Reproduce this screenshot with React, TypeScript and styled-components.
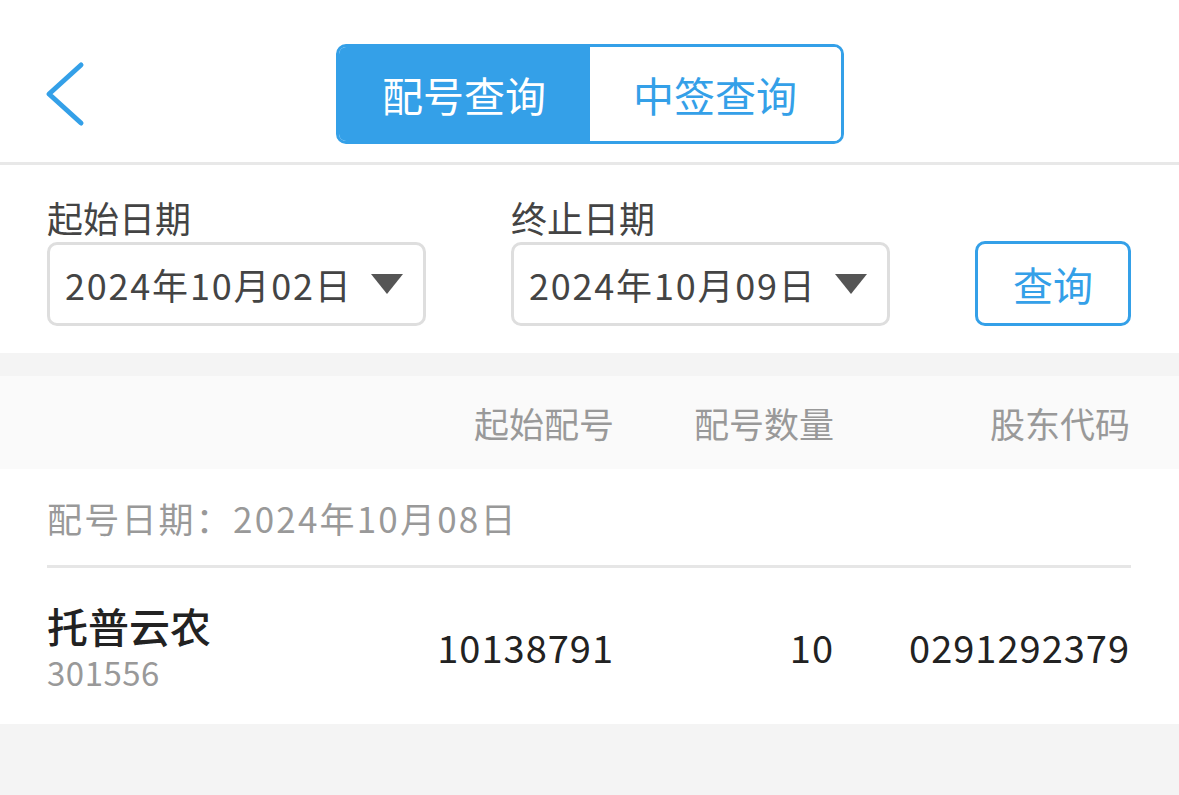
import React from "react";
import styled, { createGlobalStyle } from "styled-components";

const GlobalStyle = createGlobalStyle`
  html, body {
    margin: 0;
    padding: 0;
    background: #f4f4f4;
    font-family: "Noto Sans CJK SC", "Noto Sans", sans-serif;
  }
  #root {
    min-height: 100vh;
  }
`;

const BLUE = "#34a0e8";

const Header = styled.div`
  display: grid;
  grid-template-columns: 1fr auto 1fr;
  align-items: center;
  height: 165px;
  padding-top: 44px;
  box-sizing: border-box;
  padding-bottom: 18px;
  background: #fff;
  border-bottom: 3px solid #e8e8e8;
`;

const BackButton = styled.div`
  display: flex;
  align-items: center;
  padding-left: 44px;
`;

const Segments = styled.div`
  display: flex;
  width: 508px;
  height: 100px;
  box-sizing: border-box;
  border: 3px solid ${BLUE};
  border-radius: 10px;
  overflow: hidden;
`;

const Segment = styled.div<{ $active?: boolean }>`
  flex: 1;
  display: flex;
  align-items: center;
  justify-content: center;
  font-size: 41px;
  color: ${(p) => (p.$active ? "#fff" : BLUE)};
  background: ${(p) => (p.$active ? BLUE : "#fff")};
`;

const Filters = styled.div`
  display: flex;
  align-items: flex-end;
  gap: 85px;
  padding: 30px 47px 27px;
  background: #fff;
`;

const Field = styled.div`
  display: flex;
  flex-direction: column;
`;

const Label = styled.div`
  font-size: 36px;
  line-height: 44px;
  color: #444;
  margin-bottom: 3px;
`;

const DateBox = styled.div`
  width: 379px;
  height: 84px;
  box-sizing: border-box;
  border: 3px solid #dedede;
  border-radius: 10px;
  display: flex;
  align-items: center;
  justify-content: space-between;
  padding: 0 20px 0 15px;
  font-size: 36px;
  letter-spacing: 1.8px;
  color: #444;
`;

const Caret = styled.span`
  width: 0;
  height: 0;
  border-left: 16px solid transparent;
  border-right: 16px solid transparent;
  border-top: 20px solid #555;
`;

const QueryButton = styled.div`
  width: 156px;
  height: 85px;
  box-sizing: border-box;
  border: 3px solid ${BLUE};
  border-radius: 10px;
  display: flex;
  align-items: center;
  justify-content: center;
  font-size: 40px;
  color: ${BLUE};
`;

const Spacer = styled.div`
  height: 23px;
  background: #f4f4f4;
`;

const Columns = styled.div`
  display: grid;
  grid-template-columns: 1fr 200px 220px 296px;
  align-items: center;
  padding: 0 49px 0 47px;
`;

const TableHead = styled(Columns)`
  height: 93px;
  background: #fafafa;
  font-size: 35px;
  color: #999;
`;

const Cell = styled.div<{ $right?: boolean }>`
  text-align: ${(p) => (p.$right ? "right" : "left")};
`;

const Group = styled.div`
  background: #fff;
`;

const GroupTitle = styled.div`
  height: 96px;
  display: flex;
  align-items: center;
  margin: 0 48px 0 47px;
  border-bottom: 3px solid #e6e6e6;
  font-size: 35px;
  letter-spacing: 2.2px;
  color: #999;
`;

const Row = styled(Columns)`
  height: 156px;
  font-size: 38px;
  letter-spacing: 1px;
  color: #222;
`;

const Name = styled.div`
  font-size: 41px;
  font-weight: 500;
  line-height: 48px;
  letter-spacing: 0;
  color: #222;
  margin-bottom: 4px;
`;

const Code = styled.div`
  font-size: 33px;
  line-height: 38px;
  letter-spacing: 0.5px;
  color: #999;
`;

export default function App() {
  return (
    <>
      <GlobalStyle />
      <Header>
        <BackButton>
          <svg width="42" height="66" viewBox="0 0 42 66">
            <polyline
              points="37,4 5,33 37,62"
              fill="none"
              stroke={BLUE}
              strokeWidth="5"
              strokeLinecap="round"
              strokeLinejoin="round"
            />
          </svg>
        </BackButton>
        <Segments>
          <Segment $active>配号查询</Segment>
          <Segment>中签查询</Segment>
        </Segments>
        <div />
      </Header>

      <Filters>
        <Field>
          <Label>起始日期</Label>
          <DateBox>
            <span>2024年10月02日</span>
            <Caret />
          </DateBox>
        </Field>
        <Field>
          <Label>终止日期</Label>
          <DateBox>
            <span>2024年10月09日</span>
            <Caret />
          </DateBox>
        </Field>
        <QueryButton>查询</QueryButton>
      </Filters>

      <Spacer />

      <TableHead>
        <Cell />
        <Cell $right>起始配号</Cell>
        <Cell $right>配号数量</Cell>
        <Cell $right>股东代码</Cell>
      </TableHead>

      <Group>
        <GroupTitle>配号日期：2024年10月08日</GroupTitle>
        <Row>
          <Cell>
            <Name>托普云农</Name>
            <Code>301556</Code>
          </Cell>
          <Cell $right>10138791</Cell>
          <Cell $right>10</Cell>
          <Cell $right>0291292379</Cell>
        </Row>
      </Group>
    </>
  );
}
